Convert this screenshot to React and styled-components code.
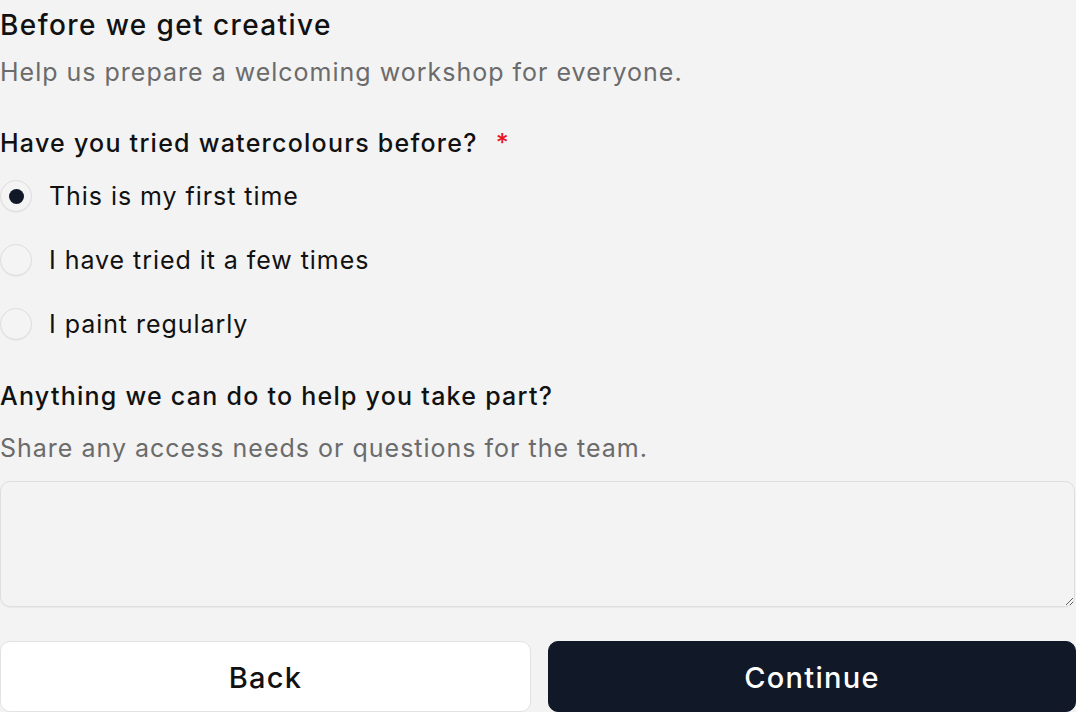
import React, { useState } from "react";
import styled, { createGlobalStyle } from "styled-components";

const Global = createGlobalStyle`
  html, body { margin: 0; padding: 0; background: #f3f3f3; }
  body { font-family: Inter, "Noto Sans", "Liberation Sans", sans-serif; color: #111111; }
  * { box-sizing: border-box; }
`;

const Form = styled.form`
  width: 1076px;
  display: flex;
  flex-direction: column;
  padding-top: 5px;
`;

const Title = styled.h1`
  margin: 0;
  font-size: 28px;
  line-height: 40px;
  font-weight: 450;
  letter-spacing: 1.4px;
  color: #111111;
`;

const Hint = styled.p`
  margin: ${(p) => p.$mt || 0}px 0 0 0;
  font-size: 25px;
  line-height: 36px;
  letter-spacing: 1px;
  color: #6b6b6b;
`;

const Question = styled.div`
  margin-top: ${(p) => p.$mt || 0}px;
  font-size: 25px;
  line-height: 36px;
  font-weight: 450;
  letter-spacing: 1.25px;
  color: #111111;
`;

const Required = styled.span`
  color: #e5171d;
  margin-left: 18px;
`;

const Options = styled.div`
  margin-top: 11px;
  display: flex;
  flex-direction: column;
  gap: 16px;
`;

const Option = styled.label`
  display: flex;
  align-items: center;
  gap: 17px;
  height: 48px;
  font-size: 25px;
  letter-spacing: 0.95px;
  color: #111111;
  cursor: pointer;
`;

const RadioInput = styled.input`
  appearance: none;
  margin: 0;
  width: 32px;
  height: 32px;
  border-radius: 50%;
  border: 1.75px solid #dedede;
  background: #f4f4f4;
  box-shadow: 0 1px 1px rgba(0, 0, 0, 0.04);
  display: grid;
  place-items: center;
  &::after {
    content: "";
    width: 15px;
    height: 15px;
    border-radius: 50%;
    background: #111827;
    transform: scale(${(p) => (p.checked ? 1 : 0)});
  }
`;

const TextArea = styled.textarea`
  margin-top: 15px;
  width: 1075px;
  height: 126px;
  border: 1.75px solid #dedede;
  border-radius: 10px;
  background: #f3f3f3;
  box-shadow: 0 1px 1px rgba(0, 0, 0, 0.04);
  font: inherit;
  font-size: 25px;
  padding: 14px 21px;
  outline: none;
`;

const Actions = styled.div`
  margin-top: 34px;
  display: grid;
  grid-template-columns: 531px 1fr;
  gap: 17px;
`;

const Button = styled.button`
  height: 71px;
  border-radius: 10px;
  font-family: inherit;
  font-size: 29px;
  font-weight: 450;
  letter-spacing: 1.3px;
  padding-top: 3px;
  cursor: pointer;
  border: 1.75px solid ${(p) => (p.$primary ? "#111827" : "#e2e2e2")};
  background: ${(p) => (p.$primary ? "#111827" : "#ffffff")};
  color: ${(p) => (p.$primary ? "#ffffff" : "#111111")};
`;

const options = [
  "This is my first time",
  "I have tried it a few times",
  "I paint regularly",
];

export default function App() {
  const [choice, setChoice] = useState(0);
  return (
    <>
      <Global />
      <Form onSubmit={(e) => e.preventDefault()}>
        <Title>Before we get creative</Title>
        <Hint $mt={9}>Help us prepare a welcoming workshop for everyone.</Hint>
        <Question $mt={35}>
          Have you tried watercolours before?<Required>*</Required>
        </Question>
        <Options>
          {options.map((o, i) => (
            <Option key={o}>
              <RadioInput
                type="radio"
                name="experience"
                checked={choice === i}
                onChange={() => setChoice(i)}
              />
              {o}
            </Option>
          ))}
        </Options>
        <Question $mt={30}>Anything we can do to help you take part?</Question>
        <Hint $mt={16}>Share any access needs or questions for the team.</Hint>
        <TextArea />
        <Actions>
          <Button type="button">Back</Button>
          <Button type="submit" $primary>
            Continue
          </Button>
        </Actions>
      </Form>
    </>
  );
}
